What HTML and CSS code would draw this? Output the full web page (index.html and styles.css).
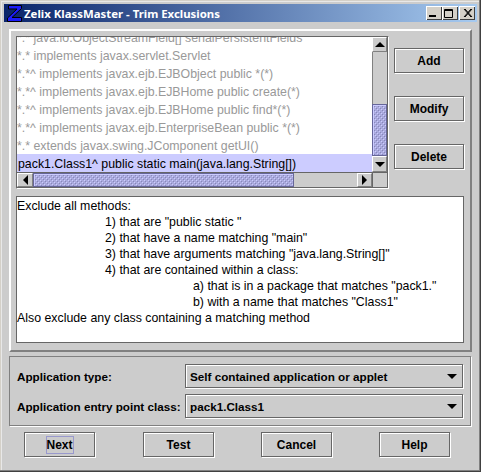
FILE: index.html
```html
<!DOCTYPE html>
<html lang="en">
    <head>
        <meta charset="UTF-8" />
        <title>Zelix KlassMaster - Trim Exclusions</title>
        <link rel="stylesheet" href="styles.css">
    </head>
    <body>
        <div class="window">
            <div class="titlebar">
                <svg class="logo" width="15" height="17" viewBox="0 0 15 17">
                    <path d="M1.5 .5H14.5V3.5L5 12.5H14.5V16.5H.5V13L10 4H1.5Z" fill="#1c1cf8" stroke="#000" stroke-width="1"/>
                </svg>
                <span class="title">Zelix KlassMaster - Trim Exclusions</span>
                <div class="win-buttons">
                    <span class="win-btn"><svg width="16" height="14" viewBox="0 0 16 14"><path d="M3 9H10V11H3Z" fill="#000"/></svg></span>
                    <span class="win-btn"><svg width="16" height="14" viewBox="0 0 16 14"><path d="M2.5 3.5H10.5V11.5H2.5ZM2 4.5H11" fill="none" stroke="#000"/></svg></span>
                    <span class="win-btn win-close"><svg width="16" height="14" viewBox="0 0 16 14"><path d="M5 3L12 11M6 3L13 11M12 3L5 11M13 3L6 11" fill="none" stroke="#000"/></svg></span>
                </div>
            </div>
            <div class="content">
                <div class="top-panel">
                    <div class="list-row">
                        <div class="list-box">
                            <div class="list-main">
                                <div class="list-view">
                                    <ul class="items">
                                        <li>*.* java.io.ObjectStreamField[] serialPersistentFields</li>
                                        <li>*.* implements javax.servlet.Servlet</li>
                                        <li>*.*^ implements javax.ejb.EJBObject public *(*)</li>
                                        <li>*.*^ implements javax.ejb.EJBHome public create(*)</li>
                                        <li>*.*^ implements javax.ejb.EJBHome public find*(*)</li>
                                        <li>*.*^ implements javax.ejb.EnterpriseBean public *(*)</li>
                                        <li>*.* extends javax.swing.JComponent getUI()</li>
                                        <li class="selected">pack1.Class1^ public static main(java.lang.String[])</li>
                                    </ul>
                                </div>
                                <div class="vscroll">
                                    <span class="arrow-btn up"><i class="tri tri-up"></i></span>
                                    <span class="v-track"></span>
                                    <span class="v-thumb"></span>
                                    <span class="arrow-btn"><i class="tri tri-down"></i></span>
                                </div>
                            </div>
                            <div class="hscroll">
                                <span class="arrow-btn left"><i class="tri tri-left"></i></span>
                                <span class="h-thumb"></span>
                                <span class="h-track"></span>
                                <span class="arrow-btn right"><i class="tri tri-right"></i></span>
                                <span class="corner"></span>
                            </div>
                        </div>
                        <div class="side-buttons">
                            <button class="btn">Add</button>
                            <button class="btn">Modify</button>
                            <button class="btn">Delete</button>
                        </div>
                    </div>
                    <div class="description">
                        <p>Exclude all methods:</p>
                        <p class="ind1">1) that are "public static "</p>
                        <p class="ind1">2) that have a name matching "main"</p>
                        <p class="ind1">3) that have arguments matching "java.lang.String[]"</p>
                        <p class="ind1">4) that are contained within a class:</p>
                        <p class="ind2">a) that is in a package that matches "pack1."</p>
                        <p class="ind2">b) with a name that matches "Class1"</p>
                        <p>Also exclude any class containing a matching method</p>
                    </div>
                </div>
                <div class="app-panel">
                    <div class="app-row">
                        <label>Application type:</label>
                        <div class="combo"><span>Self contained application or applet</span><i class="tri tri-combo"></i></div>
                    </div>
                    <div class="app-row">
                        <label>Application entry point class:</label>
                        <div class="combo"><span>pack1.Class1</span><i class="tri tri-combo"></i></div>
                    </div>
                </div>
                <div class="footer">
                    <button class="btn"><span class="focused">Next</span></button>
                    <button class="btn">Test</button>
                    <button class="btn">Cancel</button>
                    <button class="btn">Help</button>
                </div>
            </div>
        </div>
    </body>
</html>
```

FILE: styles.css
```css
* {
    box-sizing: border-box;
}

html, body {
    margin: 0;
    padding: 0;
    background-color: #d4d0c8;
}

body {
    font-family: "Liberation Sans", Arial, sans-serif;
    font-size: 12px;
    color: #000;
}

.window {
    width: 481px;
    height: 472px;
    display: flex;
    flex-direction: column;
    padding: 4px 4px 2px 4px;
    background-color: #cccccc;
    box-shadow: inset -1px -1px #404040, inset -2px -2px #808080, inset 1px 1px #d4d0c8, inset 2px 2px #e8e8e8;
    overflow: hidden;
}

.titlebar {
    height: 18px;
    flex: none;
    display: flex;
    align-items: center;
    padding: 0 2px 0 3px;
    background: linear-gradient(to right, #0a246a, #a6caf0);
    color: #fff;
}

.logo {
    flex: none;
}

.title {
    margin-left: 2px;
    font-family: "Noto Sans", sans-serif;
    font-size: 11.4px;
    font-weight: bold;
}

.win-buttons {
    margin-left: auto;
    display: flex;
}

.win-btn {
    width: 16px;
    height: 14px;
    background-color: #d4d0c8;
    box-shadow: inset 1px 1px #fff, inset -1px -1px #404040;
    display: block;
}

.win-btn svg {
    display: block;
}

.win-close {
    margin-left: 1px;
}

.content {
    flex: 1;
    display: flex;
    flex-direction: column;
    padding: 7px 5px 0 5px;
}

.top-panel {
    height: 323px;
    flex: none;
    padding: 5px 6px 5px 5px;
    border-top: 2px solid #fff;
    border-left: 2px solid #fff;
    border-right: 2px solid #808080;
    border-bottom: 2px solid #808080;
}

.list-row {
    display: flex;
    height: 153px;
}

.list-box {
    width: 373px;
    flex: none;
    border: 1px solid #666;
    border-right-color: #fff;
    border-bottom-color: #fff;
    display: flex;
    flex-direction: column;
    background-color: #fff;
}

.list-main {
    height: 135px;
    flex: none;
    display: flex;
}

.list-view {
    flex: 1;
    overflow: hidden;
}

.items {
    list-style: none;
    margin: -9px 0 0 0;
    padding: 0;
    font-size: 12.35px;
    color: #999999;
}

.items li {
    height: 18px;
    line-height: 20px;
    white-space: nowrap;
}

.items .selected {
    background-color: #ccccff;
    color: #000;
    padding-left: 1px;
}

.vscroll {
    width: 16px;
    flex: none;
    display: flex;
    flex-direction: column;
    background-color: #ccc;
    border-right: 1px solid #666;
}

.arrow-btn {
    height: 16px;
    flex: none;
    display: flex;
    align-items: center;
    justify-content: center;
    background-color: #ccc;
    border: 1px solid #808080;
    border-top-color: #fff;
    border-left-color: #fff;
}

.arrow-btn.up {
    height: 15px;
}

.arrow-btn.left {
    width: 16px;
    height: 14px;
}

.arrow-btn.right {
    width: 15px;
    height: 14px;
}

.v-track {
    flex: 1;
    background-color: #ccc;
    border-left: 1px solid #808080;
}

.v-thumb,
.h-thumb {
    background-color: #aaaadd;
    background-image: url("data:image/svg+xml,%3Csvg xmlns='http://www.w3.org/2000/svg' width='4' height='4' shape-rendering='crispEdges'%3E%3Cpath d='M0 0h1v1H0zM2 2h1v1H2z' fill='%23ccccff'/%3E%3Cpath d='M1 1h1v1H1zM3 3h1v1H3z' fill='%238888bb'/%3E%3C/svg%3E");
    border: 1px solid #666699;
    box-shadow: inset 1px 1px #ccccff;
}

.v-thumb {
    height: 52px;
    flex: none;
}

.hscroll {
    height: 16px;
    flex: none;
    display: flex;
    background-color: #ccc;
    border-top: 1px solid #666;
    border-bottom: 1px solid #666;
}

.h-thumb {
    width: 261px;
    flex: none;
}

.h-track {
    flex: 1;
    background-color: #ccc;
}

.corner {
    width: 16px;
    flex: none;
    background-color: #ccc;
    border-left: 1px solid #666;
    border-right: 1px solid #666;
}

.tri {
    display: block;
    width: 0;
    height: 0;
    border-style: solid;
    border-color: transparent;
}

.tri-up {
    border-width: 0 5px 5px;
    border-bottom-color: #000;
}

.tri-down {
    border-width: 5px 5px 0;
    border-top-color: #000;
}

.tri-left {
    border-width: 5px 5px 5px 0;
    border-right-color: #000;
}

.tri-right {
    border-width: 5px 0 5px 5px;
    border-left-color: #000;
}

.tri-combo {
    border-width: 5px 5px 0;
    border-top-color: #000;
}

.side-buttons {
    display: flex;
    flex-direction: column;
    gap: 23px;
    margin-left: 5px;
    padding-top: 12px;
}

.btn {
    width: 70px;
    height: 25px;
    padding: 0;
    font-family: "Liberation Sans", Arial, sans-serif;
    font-size: 12px;
    font-weight: bold;
    color: #000;
    background-color: #ccc;
    border: 1px solid #666;
    box-shadow: 1px 1px 0 #fff, inset 1px 1px 0 #fff;
}

.description {
    height: 147px;
    margin-top: 7px;
    padding-top: 1px;
    background-color: #fff;
    border: 1px solid #666;
    font-size: 12.35px;
}

.description p {
    margin: 0;
    height: 16px;
    line-height: 16px;
    white-space: nowrap;
}

.description .ind1 {
    padding-left: 88px;
}

.description .ind2 {
    padding-left: 176px;
}

.app-panel {
    width: 462px;
    height: 70px;
    flex: none;
    margin-top: 4px;
    padding: 7px 7px 0 7px;
    display: flex;
    flex-direction: column;
    gap: 6px;
    border: 1px solid #808080;
    box-shadow: 1px 1px 0 #fff;
}

.app-row {
    display: flex;
    align-items: center;
    justify-content: space-between;
    font-size: 11.7px;
    font-weight: bold;
}

.combo {
    width: 278px;
    height: 24px;
    display: flex;
    align-items: center;
    justify-content: space-between;
    padding: 0 5px 0 4px;
    border: 1px solid #666;
    box-shadow: 1px 1px 0 #fff, inset 1px 1px 0 #fff;
}

.footer {
    display: flex;
    gap: 47px;
    padding: 6px 0 0 15px;
}

.footer .btn {
    width: 71px;
}

.footer .btn:first-child {
    margin-right: 1px;
}

.focused {
    display: inline-block;
    width: 28px;
    height: 18px;
    line-height: 16px;
    border: 1px solid #9999cc;
}
```
